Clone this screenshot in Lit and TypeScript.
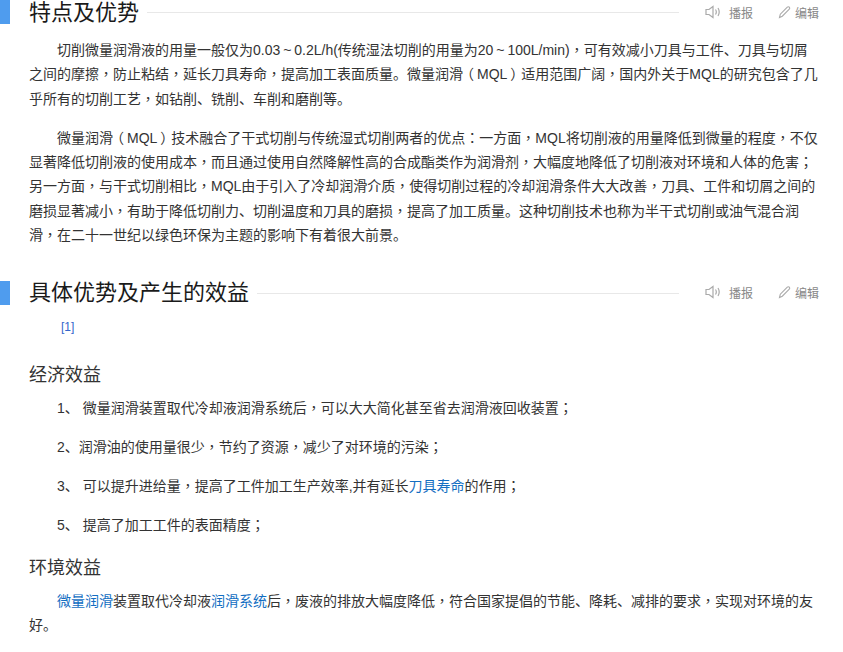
import { LitElement, html, css } from "lit";
import { customElement } from "lit/decorators.js";

const punct = (s: string) =>
  s.split(/([，：；～（）])/).map((p, i) => {
    if (i % 2 === 0) return p;
    if (p === "～") return html`<span class="cell">~</span>`;
    if (p === "（") return html`<span class="open">${p}</span>`;
    if (p === "）") return html`<span class="close">${p}</span>`;
    return html`<span class="pc">${p}</span>`;
  });

@customElement("app-root")
export class AppRoot extends LitElement {
  static styles = css`
    :host { display: block; width: 843px; height: 652px; overflow: hidden; background: #fff;
      font-family: "Liberation Sans", "Noto Sans CJK SC", sans-serif; color: #333; font-size: 14px;
      text-spacing-trim: space-all; }
    .page { display: flex; flex-direction: column; }
    .h2 { display: flex; align-items: center; height: 26px; padding-right: 24px; }
    .bar { width: 10px; height: 24px; background: #4f9cee; margin-right: 19px; flex: none; }
    .h2.top .bar { align-self: flex-start; }
    .h2.top .rule { margin-bottom: 1px; }
    .h2 h2 { margin: 0; font-size: 22px; font-weight: 400; color: #1a1a1a; line-height: 26px; white-space: nowrap; }
    .rule { flex: 1; height: 1px; background: #e8e8e8; margin: 0 0 0 8px; }
    .tools { display: flex; align-items: center; padding-left: 26px; font-size: 12px; color: #888; height: 26px; margin-bottom: 2px; }
    .tool { display: flex; align-items: center; }
    .tool + .tool { margin-left: 25px; }
    .tool svg { display: block; }
    .gap1 { margin-left: 8px; }
    .gap2 { margin-left: 3px; }
    p { margin: 0; line-height: 24.3px; padding: 0 24px 0 29px; }
    p.in { text-indent: 28px; }
    .t1 { margin-top: 12px; }
    .t2 { margin-top: 15px; }
    .sec2 { margin-top: 33px; }
    .ref { height: 20px; line-height: 20px; padding-left: 61px; margin-top: 11px; font-size: 12px; color: #3366cc; }
    h3 { margin: 0; padding-left: 29px; font-size: 18px; font-weight: 400; color: #333; line-height: 24px; }
    .h3a { margin-top: 26px; }
    .h3b { margin-top: 18px; }
    .li { margin-top: 14.7px; }
    .li.first { margin-top: 9px; }
    a { color: #136ec2; text-decoration: none; }
    .pc { font-family: "Noto Sans CJK TC", sans-serif; line-height: 0; }
    .cell { display: inline-block; width: 1em; text-align: center; text-indent: 0; line-height: 0; }
    .open, .close { display: inline-block; width: 1em; text-indent: 0; line-height: 0; }
    .open { margin-left: -3px; margin-right: 3px; }
    .close { margin-left: 3px; margin-right: -3px; }
  `;

  tools() {
    return html`<div class="tools">
      <span class="tool">
        <svg width="16" height="14" viewBox="0 0 16 14" fill="none" stroke="#aaa" stroke-width="1.2">
          <path d="M1 4.5h3L8 1.5v11L4 9.5H1z" /><path d="M10.5 4.5c1 1.5 1 3.5 0 5M13 3c1.5 2.5 1.5 5.5 0 8" />
        </svg>
        <span class="gap1">播报</span>
      </span>
      <span class="tool">
        <svg width="14" height="14" viewBox="0 0 14 14" fill="none" stroke="#aaa" stroke-width="1.1">
          <path d="M1.5 12.5l.8-3.3 7-7c.6-.6 1.5-.6 2 0s.6 1.4 0 2l-7 7z" />
        </svg>
        <span class="gap2">编辑</span>
      </span>
    </div>`;
  }

  render() {
    return html`<div class="page">
      <div class="h2 top"><div class="bar"></div><h2>特点及优势</h2><div class="rule"></div>${this.tools()}</div>
      <p class="in t1">${punct("切削微量润滑液的用量一般仅为0.03～0.2L/h(传统湿法切削的用量为20～100L/min)，可有效减小刀具与工件、刀具与切屑之间的摩擦，防止粘结，延长刀具寿命，提高加工表面质量。微量润滑（MQL）适用范围广阔，国内外关于MQL的研究包含了几乎所有的切削工艺，如钻削、铣削、车削和磨削等。")}</p>
      <p class="in t2">${punct("微量润滑（MQL）技术融合了干式切削与传统湿式切削两者的优点：一方面，MQL将切削液的用量降低到微量的程度，不仅显著降低切削液的使用成本，而且通过使用自然降解性高的合成酯类作为润滑剂，大幅度地降低了切削液对环境和人体的危害；另一方面，与干式切削相比，MQL由于引入了冷却润滑介质，使得切削过程的冷却润滑条件大大改善，刀具、工件和切屑之间的磨损显著减小，有助于降低切削力、切削温度和刀具的磨损，提高了加工质量。这种切削技术也称为半干式切削或油气混合润滑，在二十一世纪以绿色环保为主题的影响下有着很大前景。")}</p>
      <div class="h2 sec2"><div class="bar"></div><h2>具体优势及产生的效益</h2><div class="rule"></div>${this.tools()}</div>
      <div class="ref">[1]</div>
      <h3 class="h3a">经济效益</h3>
      <p class="in li first">${punct("1、 微量润滑装置取代冷却液润滑系统后，可以大大简化甚至省去润滑液回收装置；")}</p>
      <p class="in li">${punct("2、润滑油的使用量很少，节约了资源，减少了对环境的污染；")}</p>
      <p class="in li">${punct("3、 可以提升进给量，提高了工件加工生产效率,并有延长")}<a>刀具寿命</a>${punct("的作用；")}</p>
      <p class="in li">${punct("5、 提高了加工工件的表面精度；")}</p>
      <h3 class="h3b">环境效益</h3>
      <p class="in li first"><a>微量润滑</a>装置取代冷却液<a>润滑系统</a>${punct("后，废液的排放大幅度降低，符合国家提倡的节能、降耗、减排的要求，实现对环境的友好。")}</p>
    </div>`;
  }
}
